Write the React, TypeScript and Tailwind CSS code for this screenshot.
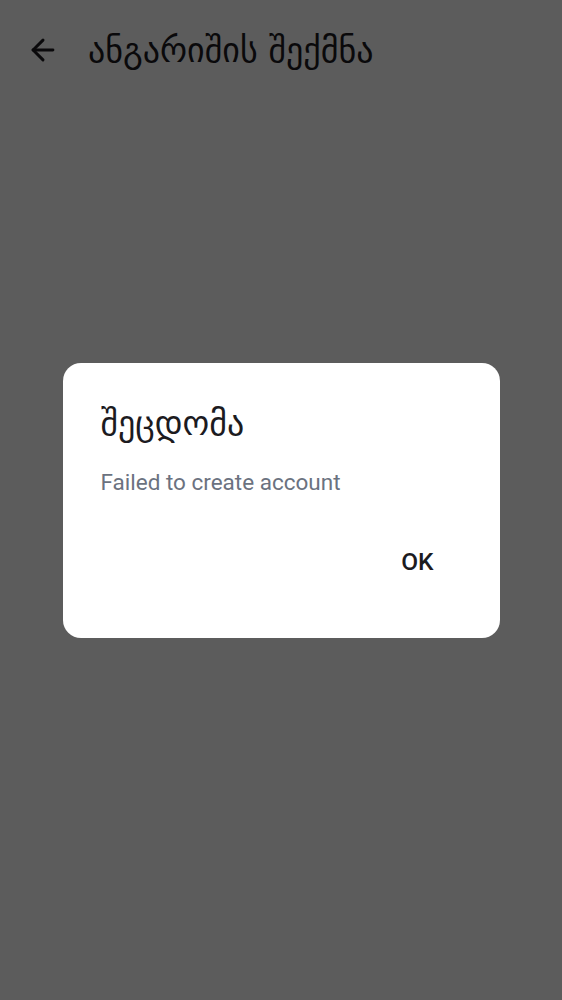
import { ArrowLeft } from 'lucide-react';

export default function App() {
  return (
    <div className="relative min-h-screen bg-white" style={{ fontFamily: '"DejaVu Sans", "Noto Sans", sans-serif' }}>
      {/* App bar */}
      <header className="flex h-[100px] items-center bg-[#fefefe] pl-[26px]">
        <ArrowLeft className="h-[34px] w-[34px] text-[#1c1b1f]" strokeWidth={2.1} />
        <h1 className="ml-[28px] text-[34px] leading-none text-[#1c1b1f]">ანგარიშის შექმნა</h1>
      </header>

      {/* Scrim + dialog */}
      <div className="fixed inset-0 flex items-center justify-center bg-black/[0.64]">
        <div className="flex w-[437px] flex-col rounded-[18px] bg-white pb-[51px] pl-[38px] pr-[48px] pt-[38px]">
          <h2 className="text-[34px] leading-[44px] text-[#1c1b1f]">შეცდომა</h2>
          <p className="mt-[23px] text-[22.5px] leading-[28px] text-[#6b7280]" style={{ fontFamily: 'Roboto, "Noto Sans", sans-serif' }}>
            Failed to create account
          </p>
          <div className="mt-[41px] flex justify-end">
            <button className="px-[18px] py-[10px] text-[24.5px] font-medium leading-[30px] text-[#1c1b1f]" style={{ fontFamily: 'Roboto, "Noto Sans", sans-serif' }}>
              OK
            </button>
          </div>
        </div>
      </div>
    </div>
  );
}
